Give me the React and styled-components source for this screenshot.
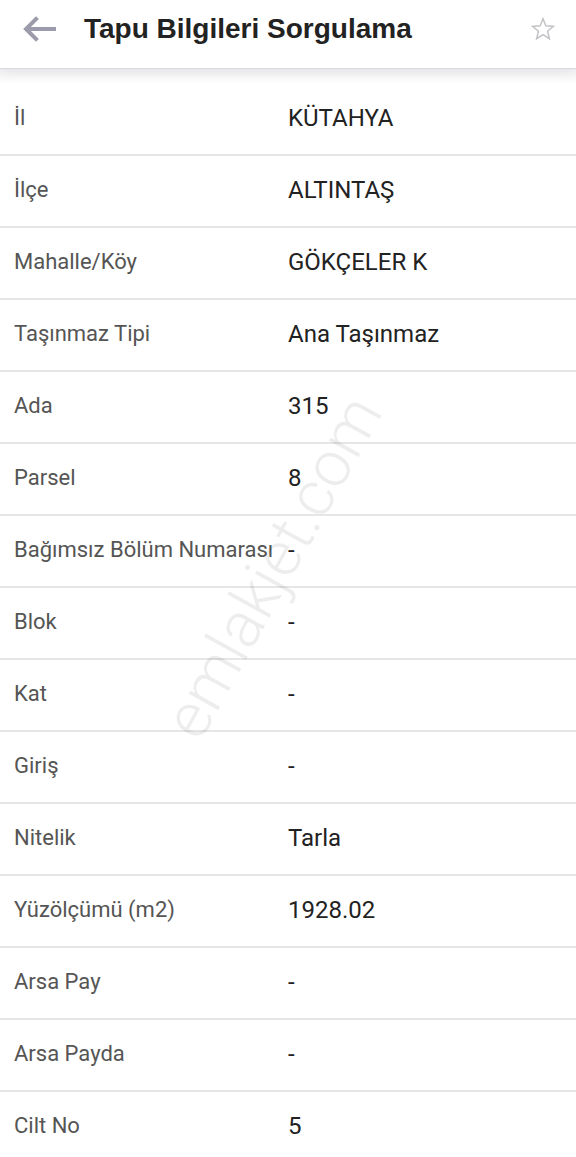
import styled, { createGlobalStyle } from 'styled-components'

const GlobalStyle = createGlobalStyle`
  html, body {
    margin: 0;
    padding: 0;
    background: #ffffff;
    font-family: Roboto, "Noto Sans", sans-serif;
  }
`

const Page = styled.div`
  position: relative;
  width: 576px;
  min-height: 1157px;
  overflow: hidden;
  background: #fff;
`

const Toolbar = styled.header`
  height: 69px;
  box-sizing: border-box;
  display: flex;
  align-items: center;
  padding: 0 20px 10px 22px;
  border-bottom: 1px solid #d9d9dd;
  box-shadow: 0 4px 12px rgba(0, 0, 0, 0.06);
  background: #fff;
  position: relative;
  z-index: 2;
`

const IconButton = styled.button`
  border: 0;
  background: none;
  padding: 0;
  display: flex;
  align-items: center;
  justify-content: center;
  color: ${p => p.$color};
`

const Title = styled.h1`
  flex: 1;
  margin: 0 0 0 28px;
  font-family: "Liberation Sans", Arial, sans-serif;
  font-size: 28px;
  font-weight: 700;
  color: #222;
`

const List = styled.dl`
  margin: 0;
  padding: 15px 0 0;
  background: linear-gradient(#f2f2f4, #fff 15px);
`

const Row = styled.div`
  display: grid;
  grid-template-columns: 274px 1fr;
  align-items: center;
  height: 70px;
  border-bottom: 2px solid #e6e6e6;
  background: #fff;
`

const Label = styled.dt`
  padding-left: 14px;
  font-size: 22px;
  color: #555;
  white-space: nowrap;
  margin-top: -4px;
`

const Value = styled.dd`
  margin: 0;
  padding-left: 14px;
  font-size: 24px;
  color: #222;
  margin-top: -2px;
`

const Watermark = styled.div`
  position: absolute;
  left: 273px;
  top: 567px;
  transform: translate(-50%, -50%) rotate(-61deg);
  font-family: Roboto, sans-serif;
  font-weight: 300;
  font-size: 64px;
  color: rgba(0, 0, 0, 0.07);
  white-space: nowrap;
  pointer-events: none;
  z-index: 3;
`

const rows = [
  ['İl', 'KÜTAHYA'],
  ['İlçe', 'ALTINTAŞ'],
  ['Mahalle/Köy', 'GÖKÇELER K'],
  ['Taşınmaz Tipi', 'Ana Taşınmaz'],
  ['Ada', '315'],
  ['Parsel', '8'],
  ['Bağımsız Bölüm Numarası', '-'],
  ['Blok', '-'],
  ['Kat', '-'],
  ['Giriş', '-'],
  ['Nitelik', 'Tarla'],
  ['Yüzölçümü (m2)', '1928.02'],
  ['Arsa Pay', '-'],
  ['Arsa Payda', '-'],
  ['Cilt No', '5'],
]

export default function App() {
  return (
    <Page>
      <GlobalStyle />
      <Toolbar>
        <IconButton $color="#9b9bab" aria-label="Geri">
          <svg width="34" height="26" viewBox="0 0 34 26" fill="none" stroke="currentColor" strokeWidth="4" strokeLinecap="square">
            <path d="M32 13H5" />
            <path d="M14 3L4 13l10 10" />
          </svg>
        </IconButton>
        <Title>Tapu Bilgileri Sorgulama</Title>
        <IconButton $color="#c4c4c8" aria-label="Favori">
          <svg width="26" height="26" viewBox="0 0 24 24" fill="none" stroke="currentColor" strokeWidth="1.4" strokeLinejoin="miter">
            <path d="M12 2.5l2.6 6.6 7 .5-5.4 4.5 1.7 6.9L12 17.2 6.1 21l1.7-6.9-5.4-4.5 7-.5z" />
          </svg>
        </IconButton>
      </Toolbar>
      <List>
        {rows.map(([k, v]) => (
          <Row key={k}>
            <Label>{k}</Label>
            <Value>{v}</Value>
          </Row>
        ))}
      </List>
      <Watermark>emlakjet.com</Watermark>
    </Page>
  )
}
